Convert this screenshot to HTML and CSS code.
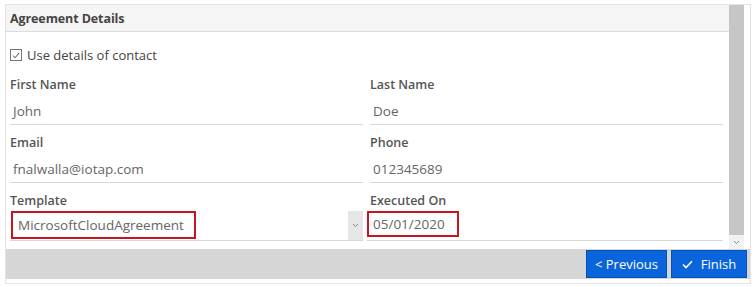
FILE: index.html
```html
<!DOCTYPE html>
<html>
<head>
<meta charset="utf-8">
<link rel="stylesheet" href="styles.css">
</head>
<body>
<div class="frame">
  <div class="scroll">
    <div class="content">
      <div class="header">Agreement Details</div>
      <div class="body">
        <label class="check-row">
          <span class="checkbox"><svg width="11" height="11" viewBox="0 0 11 11"><path d="M2.2 5.6 L4.5 8 L9 2.6" fill="none" stroke="#444" stroke-width="1.1"/></svg></span>
          <span>Use details of contact</span>
        </label>
        <div class="grid">
          <div class="field">
            <div class="label">First Name</div>
            <div class="input">John</div>
          </div>
          <div class="field">
            <div class="label">Last Name</div>
            <div class="input">Doe</div>
          </div>
          <div class="field">
            <div class="label">Email</div>
            <div class="input">fnalwalla@iotap.com</div>
          </div>
          <div class="field">
            <div class="label">Phone</div>
            <div class="input">012345689</div>
          </div>
          <div class="field">
            <div class="label">Template</div>
            <div class="input select">
              <span class="hl hl-template">MicrosoftCloudAgreement</span>
              <span class="arrow"><svg width="7" height="5" viewBox="0 0 7 5"><path d="M1 1 L3.5 3.5 L6 1" fill="none" stroke="#888" stroke-width="1"/></svg></span>
            </div>
          </div>
          <div class="field">
            <div class="label">Executed On</div>
            <div class="input date">
              <span class="hl hl-date">05/01/2020</span>
            </div>
          </div>
        </div>
      </div>
    </div>
    <div class="scrollbar">
      <div class="thumb"></div>
      <div class="down"><svg width="7" height="5" viewBox="0 0 7 5"><path d="M1 1 L3.5 3.5 L6 1" fill="none" stroke="#888" stroke-width="1"/></svg></div>
    </div>
  </div>
  <div class="footer">
    <button class="btn btn-prev">&lt; Previous</button>
    <button class="btn btn-finish"><svg class="tick" width="11" height="9" viewBox="0 0 11 9"><path d="M1 4.5 L4 7.5 L10 1.2" fill="none" stroke="#fff" stroke-width="1.6"/></svg>Finish</button>
  </div>
</div>
</body>
</html>
```
FILE: styles.css
```css
* { box-sizing: border-box; }
html, body { margin: 0; padding: 0; background: #fff; }
body {
  font-family: "Open Sans", "Noto Sans", sans-serif;
  font-size: 13px;
  color: #555;
}
.frame {
  width: 746px;
  height: 280px;
  margin: 4px 0 0 5px;
  border: 1px solid #e4e4e4;
  display: flex;
  flex-direction: column;
}
.scroll {
  display: flex;
  height: 244px;
}
.content {
  width: 723px;
  flex: 0 0 723px;
}
.header {
  height: 27px;
  background: #f5f5f5;
  border-bottom: 1px solid #dcdcdc;
  padding-left: 4px;
  font-weight: 700;
  font-size: 12.5px;
  color: #444;
  display: flex;
  align-items: center;
  letter-spacing: -0.1px;
}
.body {
  padding: 13px 5px 0 4px;
}
.check-row {
  display: flex;
  align-items: center;
  gap: 5px;
  height: 20px;
  font-size: 13px;
  color: #444;
}
.checkbox {
  width: 12px;
  height: 12px;
  border: 1px solid #777;
  display: flex;
  align-items: center;
  justify-content: center;
}
.grid {
  margin-top: 10px;
  display: grid;
  grid-template-columns: 353px 353px;
  column-gap: 7px;
  row-gap: 8px;
}
.label {
  height: 20px;
  line-height: 20px;
  font-weight: 600;
  font-size: 12.5px;
  color: #555;
}
.input {
  height: 30px;
  border-bottom: 1px solid #d8d8d8;
  padding: 7px 3px 0 3px;
  line-height: 18px;
  font-size: 13.5px;
  color: #666;
}
.select {
  padding: 0 0 0 1px;
  display: flex;
  justify-content: space-between;
  align-items: flex-start;
}
.hl {
  display: inline-flex;
  align-items: center;
  border: 2px solid #c8141e;
}
.hl-template {
  width: 185px;
  height: 28px;
  padding-left: 5px;
}
.arrow {
  width: 15px;
  height: 29px;
  background: #e6e6e6;
  display: flex;
  align-items: center;
  justify-content: center;
}
.date {
  padding: 0;
  margin-left: -3px;
}
.hl-date {
  width: 92px;
  height: 26px;
  padding-left: 4px;
}
.scrollbar {
  flex: 0 0 15px;
  width: 15px;
  margin-right: 6px;
  display: flex;
  flex-direction: column;
  background: #f2f2f2;
}
.thumb {
  height: 230px;
  width: 15px;
  background: #c6c6c6;
}
.down {
  flex: 1;
  display: flex;
  align-items: center;
  justify-content: center;
  background: #f2f2f2;
}
.footer {
  height: 30px;
  background: #d6d6d6;
  display: flex;
  justify-content: flex-end;
  align-items: stretch;
  gap: 4px;
  padding: 1px 3px 1px 0;
}
.btn {
  font-family: inherit;
  font-size: 13px;
  color: #fff;
  background: #0a64dc;
  border: 1px solid #0452b8;
  padding: 0;
  display: flex;
  align-items: center;
  justify-content: center;
  gap: 8px;
  white-space: nowrap;
}
.btn-prev { width: 81px; }
.btn-finish { width: 76px; }
```
